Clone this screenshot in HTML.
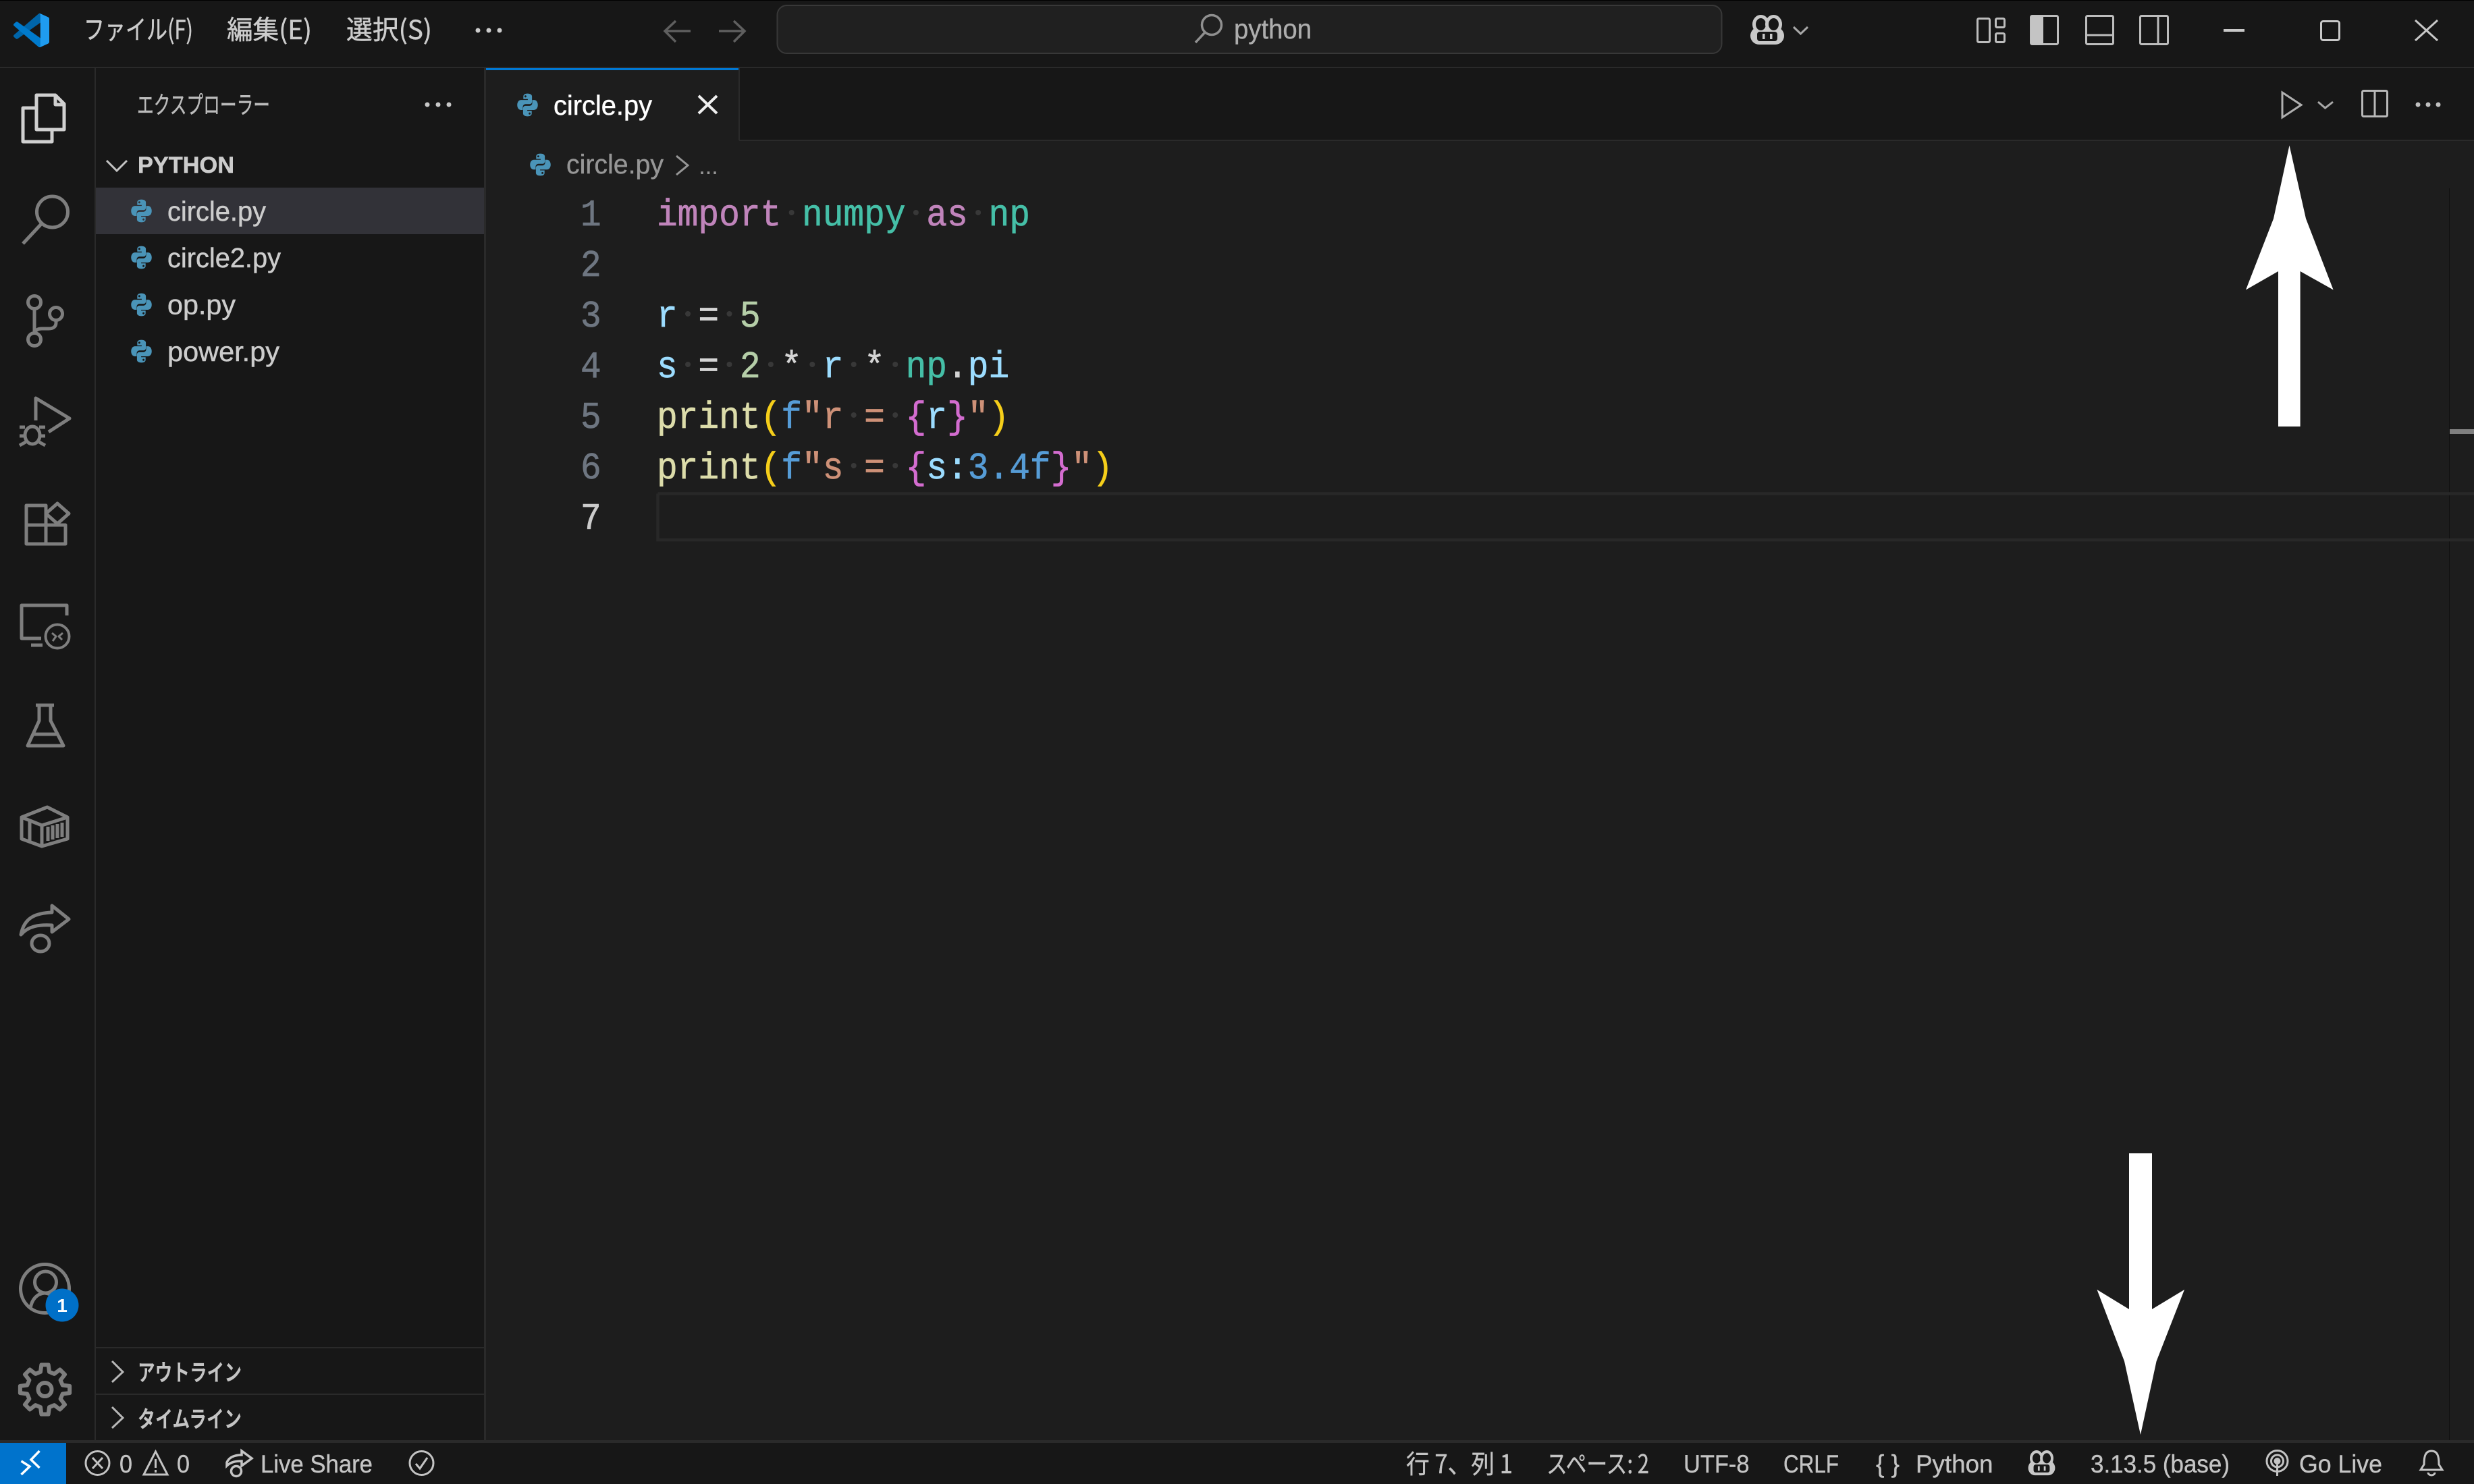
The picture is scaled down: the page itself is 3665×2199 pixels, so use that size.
<!DOCTYPE html>
<html lang="ja"><head><meta charset="utf-8"><title>circle.py - python</title>
<style>
html,body{margin:0;padding:0;background:#171717;width:3665px;height:2199px;overflow:hidden}
svg{display:block}
text{white-space:pre}
.s{font-family:"Liberation Sans","Noto Sans CJK JP",sans-serif}
.j{font-family:"Noto Sans CJK JP","Liberation Sans",sans-serif}
.m{font-family:"Liberation Mono",monospace;font-size:56px;stroke-width:.7}
.ic{fill:none;stroke:#7e7e7e;stroke-width:5;stroke-linejoin:round}
.tb{fill:none;stroke:#bdbdbd;stroke-width:3}
.st{fill:none;stroke:#c4c4c4;stroke-width:3}
.d{fill:#383838}
.ln{fill:#6e7681;stroke:#6e7681}
.cur{fill:#cccccc;stroke:#cccccc}
.kw{fill:#c084bb;stroke:#c084bb}
.ty{fill:#45bfa7;stroke:#45bfa7}
.va{fill:#9cdcfe;stroke:#9cdcfe}
.op{fill:#d4d4d4;stroke:#d4d4d4}
.nu{fill:#b5cea8;stroke:#b5cea8}
.fn{fill:#dcdcaa;stroke:#dcdcaa}
.br{fill:#f5ce1a;stroke:#f5ce1a}
.bl{fill:#569cd6;stroke:#569cd6}
.sr{fill:#ce9178;stroke:#ce9178}
.cb{fill:#d36ccf;stroke:#d36ccf}
</style></head><body>
<svg xmlns="http://www.w3.org/2000/svg" width="3665" height="2199" viewBox="0 0 3665 2199">
<defs>
<symbol id="py" viewBox="0 0 16 16" preserveAspectRatio="none">
<path fill="#4a94b8" fill-rule="evenodd" d="M8 .3C5.8.3 5 1.1 5 2.3V4H8.2V4.6H3.4C1.8 4.6.6 5.9.6 8s1.2 3.4 2.6 3.4H4.6V9.4C4.6 8.3 5.5 7.4 6.6 7.4H9.6C10.5 7.4 11.2 6.7 11.2 5.8V2.3C11.2 1.1 10.1.3 8 .3ZM6.5 1.5a.7.7 0 1 1 0 1.4.7.7 0 0 1 0-1.4Z"/>
<path fill="#4a94b8" fill-rule="evenodd" transform="rotate(180 8 8)" d="M8 .3C5.8.3 5 1.1 5 2.3V4H8.2V4.6H3.4C1.8 4.6.6 5.9.6 8s1.2 3.4 2.6 3.4H4.6V9.4C4.6 8.3 5.5 7.4 6.6 7.4H9.6C10.5 7.4 11.2 6.7 11.2 5.8V2.3C11.2 1.1 10.1.3 8 .3ZM6.5 1.5a.7.7 0 1 1 0 1.4.7.7 0 0 1 0-1.4Z"/>
</symbol>
<symbol id="cop" viewBox="0 0 54 45" preserveAspectRatio="none">
<rect x="2" y="18" width="50" height="26" rx="13" fill="#c8c8c8"/>
<ellipse cx="17.5" cy="14" rx="10" ry="11.5" fill="#171717" stroke="#c8c8c8" stroke-width="5"/>
<ellipse cx="36.5" cy="14" rx="10" ry="11.5" fill="#171717" stroke="#c8c8c8" stroke-width="5"/>
<rect x="12" y="25" width="30" height="14" rx="4" fill="#171717"/>
<rect x="20" y="28" width="3.5" height="8" fill="#c8c8c8"/><rect x="31" y="28" width="3.5" height="8" fill="#c8c8c8"/>
</symbol>
</defs>

<!-- backgrounds -->
<rect width="3665" height="2199" fill="#171717"/>
<rect x="720" y="101" width="2945" height="2033" fill="#1d1d1d"/>
<rect x="1095" y="101" width="2570" height="106" fill="#171717"/>
<rect y="0" width="3665" height="1" fill="#000"/>
<!-- borders -->
<rect y="99" width="3665" height="2" fill="#2a2a2a"/>
<rect x="140" y="101" width="2" height="2033" fill="#2a2a2a"/>
<rect x="717" y="101" width="3" height="2033" fill="#2a2a2a"/>
<rect x="1094" y="101" width="2" height="107" fill="#2a2a2a"/>
<rect x="1095" y="207" width="2570" height="2" fill="#2a2a2a"/>
<rect x="720" y="101" width="374" height="3" fill="#0078d4"/>
<rect y="2134" width="3665" height="4" fill="#2a2a2a"/>
<rect x="3628" y="279" width="1" height="1855" fill="#111"/>
<rect x="3629" y="636" width="36" height="7" fill="#808080"/>

<!-- title bar -->
<svg x="20" y="20" width="53" height="50" viewBox="0 0 100 100" preserveAspectRatio="none">
<path fill="#0065A9" d="M96.46 10.8 75.86.87a6.23 6.23 0 0 0-7.1 1.2L1.3 63.6a4.16 4.16 0 0 0 0 6.16l5.5 5a4.16 4.16 0 0 0 5.32-.24L93.3 13.4a4.13 4.13 0 0 1 6.7 3.3v-.24a6.25 6.25 0 0 0-3.54-5.66Z"/>
<path fill="#007ACC" d="M96.46 89.2 75.86 99.13a6.23 6.23 0 0 1-7.1-1.2L1.3 36.4a4.16 4.16 0 0 1 0-6.16l5.5-5a4.16 4.16 0 0 1 5.32.24L93.3 86.6a4.13 4.13 0 0 0 6.7-3.3v.24a6.25 6.25 0 0 1-3.54 5.66Z"/>
<path fill="#1F9CF0" d="M75.86 99.13a6.24 6.24 0 0 1-7.1-1.2c2.3 2.3 6.24.67 6.24-2.58V4.65c0-3.25-3.94-4.88-6.24-2.58a6.24 6.24 0 0 1 7.1-1.2L96.46 10.8A6.25 6.25 0 0 1 100 16.44v67.12a6.25 6.25 0 0 1-3.54 5.64Z"/>
</svg>
<g class="j" font-size="39" fill="#cccccc" stroke="#cccccc" stroke-width=".5">
<text x="124" y="58" textLength="162" lengthAdjust="spacingAndGlyphs">ファイル(F)</text>
<text x="336" y="58" textLength="126" lengthAdjust="spacingAndGlyphs">編集(E)</text>
<text x="513" y="58" textLength="127" lengthAdjust="spacingAndGlyphs">選択(S)</text>
</g>
<g fill="#cccccc"><circle cx="708" cy="45" r="3.5"/><circle cx="724" cy="45" r="3.5"/><circle cx="740" cy="45" r="3.5"/></g>
<path d="M1023 46H985M1001 31 985 46 1001 62" fill="none" stroke="#5f5f5f" stroke-width="3.5"/>
<path d="M1065 46H1103M1087 31 1103 46 1087 62" fill="none" stroke="#5f5f5f" stroke-width="3.5"/>
<rect x="1151.5" y="8" width="1399" height="71" rx="14" fill="#202020" stroke="#383838" stroke-width="2"/>
<circle cx="1795" cy="37" r="14.5" fill="none" stroke="#8f8f8f" stroke-width="3.5"/>
<path d="M1785 48 1771 63" fill="none" stroke="#8f8f8f" stroke-width="3.5"/>
<text class="s" x="1828" y="57" font-size="41" fill="#adadad" stroke="#adadad" stroke-width=".4" textLength="115" lengthAdjust="spacingAndGlyphs">python</text>
<use href="#cop" x="2591" y="22" width="54" height="45"/>
<path d="M2657 40 2667.5 50 2678 40" fill="none" stroke="#a8a8a8" stroke-width="3"/>
<g class="tb">
<rect x="2929.5" y="27.5" width="18" height="35" rx="2"/><rect x="2956.5" y="27.5" width="13" height="13" rx="2"/><rect x="2956.5" y="49.5" width="13" height="13" rx="2"/>
<rect x="3008.5" y="23.5" width="40" height="42" rx="2"/>
<rect x="3090.5" y="23.5" width="40" height="42" rx="2"/><path d="M3090 52H3131"/>
<rect x="3170.5" y="23.5" width="41" height="42" rx="2"/><path d="M3197 23V66"/>
</g>
<rect x="3008" y="23" width="19" height="43" rx="2" fill="#c4c4c4"/>
<rect x="3294" y="43" width="31" height="4" fill="#c8c8c8"/>
<rect x="3438.5" y="31.5" width="27" height="28" rx="3" fill="none" stroke="#c8c8c8" stroke-width="3"/>
<path d="M3578 30 3611 60M3611 30 3578 60" fill="none" stroke="#c8c8c8" stroke-width="3"/>

<!-- activity bar -->
<g class="ic" style="stroke:#d0d0d0;stroke-width:5">
<path d="M54 141H82L95 154V192H54Z"/><path d="M82 141V155H95"/><path d="M52 160H34V210H77V194"/>
</g>
<g class="ic">
<circle cx="77.5" cy="314" r="23"/><path d="M61 332 34 361"/>
<circle cx="51" cy="448" r="9.5"/><circle cx="51" cy="503" r="9.5"/><circle cx="83" cy="465" r="9.5"/>
<path d="M51 458V493M83 475V478Q83 487 72 487H62Q53 487 51 494"/>
<path d="M53 623V590L103 620 72 640"/>
<ellipse cx="48" cy="645" rx="11" ry="13"/><path d="M29 633H37M29 646H37M29 660 38 655M58 633H67M58 646H67M67 660 58 655"/>
<path d="M68 778V749H39V806H97V778H39M68 778V806"/><path d="M68 761 85 746 102 761 85 776Z"/>
<path d="M99 912V897H32V946H61M46 956H63"/>
<circle cx="85" cy="943" r="17.5" stroke-width="4"/><path d="M77 938 83 943 78 950M93 938 87 943 92 948" stroke-width="3"/>
<path d="M53 1045H80M58 1045V1068L41 1105H94L75 1068V1045M49 1088H86"/>
<path d="M32 1211 70 1196 100 1211V1243L62 1254 32 1243ZM32 1211 62 1223 100 1211M62 1223V1254M44 1217V1247M71 1225V1246M78 1223V1244M85 1221V1242M92 1219V1240"/>
<path d="M31 1385C36 1358 55 1353 77 1352V1342L102 1362 77 1381V1371C58 1370 42 1372 31 1385Z" stroke-width="5"/>
<ellipse cx="60" cy="1398" rx="13" ry="12" stroke-width="5"/>
<circle cx="66.5" cy="1909.5" r="36"/><circle cx="67.5" cy="1900" r="16"/><path d="M45 1939C47 1925 55 1917 66 1916C78 1917 86 1925 88 1939"/>
<path transform="translate(66.5 2059)" stroke-width="6" d="M-6.53-26.2-5.15-36.64 5.15-36.64 6.53-26.2 13.91-23.14 22.27-29.55 29.55-22.27 23.14-13.91 26.2-6.53 36.64-5.15 36.64 5.15 26.2 6.53 23.14 13.91 29.55 22.27 22.27 29.55 13.91 23.14 6.53 26.2 5.15 36.64-5.15 36.64-6.53 26.2-13.91 23.14-22.27 29.55-29.55 22.27-23.14 13.91-26.2 6.53-36.64 5.15-36.64-5.15-26.2-6.53-23.14-13.91-29.55-22.27-22.27-29.55-13.91-23.14Z"/>
<circle cx="66.5" cy="2059" r="10" stroke-width="6"/>
</g>
<circle cx="92" cy="1934" r="24.5" fill="#0070c8"/>
<text class="s" x="92" y="1944" font-size="28" font-weight="700" fill="#fff" text-anchor="middle">1</text>

<!-- sidebar -->
<text class="j" x="203" y="168" font-size="36" fill="#bbbbbb" stroke="#bbbbbb" stroke-width=".5" textLength="197" lengthAdjust="spacingAndGlyphs">エクスプローラー</text>
<g fill="#c8c8c8"><circle cx="633" cy="155" r="3.5"/><circle cx="649" cy="155" r="3.5"/><circle cx="665" cy="155" r="3.5"/></g>
<path d="M158 238 173 253 188 238" fill="none" stroke="#c4c4c4" stroke-width="3"/>
<text class="s" x="204" y="256" font-size="34" font-weight="700" fill="#cccccc" stroke="#cccccc" stroke-width=".5" textLength="143" lengthAdjust="spacingAndGlyphs">PYTHON</text>
<rect x="142" y="278" width="575" height="69" fill="#323238"/>
<use href="#py" x="193" y="295" width="33" height="35"/>
<use href="#py" x="193" y="364" width="33" height="35"/>
<use href="#py" x="193" y="434" width="33" height="35"/>
<use href="#py" x="193" y="503" width="33" height="35"/>
<g class="s" font-size="41" fill="#cccccc" stroke="#cccccc" stroke-width=".5">
<text x="248" y="327" textLength="146" lengthAdjust="spacingAndGlyphs">circle.py</text>
<text x="248" y="396" textLength="168" lengthAdjust="spacingAndGlyphs">circle2.py</text>
<text x="248" y="465.5" textLength="101" lengthAdjust="spacingAndGlyphs">op.py</text>
<text x="248" y="535" textLength="166" lengthAdjust="spacingAndGlyphs">power.py</text>
</g>
<rect x="142" y="1996" width="575" height="2" fill="#2a2a2a"/>
<rect x="142" y="2065" width="575" height="2" fill="#2a2a2a"/>
<path d="M166 2017 182 2033 166 2048M166 2085 182 2101 166 2116" fill="none" stroke="#b8b8b8" stroke-width="3"/>
<g class="j" font-size="34" font-weight="700" fill="#c4c4c4">
<text x="204" y="2046" textLength="154" lengthAdjust="spacingAndGlyphs">アウトライン</text>
<text x="204" y="2115" textLength="154" lengthAdjust="spacingAndGlyphs">タイムライン</text>
</g>

<!-- tab -->
<use href="#py" x="765" y="138" width="33" height="35"/>
<text class="s" x="820" y="170" font-size="41" fill="#ffffff" stroke="#ffffff" stroke-width=".5" textLength="146" lengthAdjust="spacingAndGlyphs">circle.py</text>
<path d="M1035 142 1062 168M1062 142 1035 168" fill="none" stroke="#f0f0f0" stroke-width="4"/>
<path d="M3381 137 3409 155.5 3381 174Z" fill="none" stroke="#b0b0b0" stroke-width="3"/>
<path d="M3434 151 3444.5 160 3456 151" fill="none" stroke="#a8a8a8" stroke-width="3"/>
<rect x="3499.5" y="134.5" width="37" height="38" rx="2" fill="none" stroke="#b8b8b8" stroke-width="3"/>
<path d="M3518 134V173" stroke="#b8b8b8" stroke-width="3"/>
<g fill="#c0c0c0"><circle cx="3582" cy="155" r="3.5"/><circle cx="3597" cy="155" r="3.5"/><circle cx="3612" cy="155" r="3.5"/></g>

<!-- breadcrumb -->
<use href="#py" x="784" y="227" width="33" height="34"/>
<text class="s" x="839" y="257" font-size="40" fill="#969696" stroke="#969696" stroke-width=".4" textLength="144" lengthAdjust="spacingAndGlyphs">circle.py</text>
<path d="M1002 231 1019 245 1002 259" fill="none" stroke="#969696" stroke-width="3"/>
<text class="s" x="1035" y="258" font-size="36" fill="#969696" textLength="29" lengthAdjust="spacing">...</text>

<!-- current line -->
<path d="M974.5 731.5H3665M3665 800H974.5V731.5" fill="none" stroke="#282828" stroke-width="4.5"/>

<!-- line numbers -->
<g class="m">
<text class="ln" x="860" y="334" textLength="30.66" lengthAdjust="spacingAndGlyphs">1</text>
<text class="ln" x="860" y="409" textLength="30.66" lengthAdjust="spacingAndGlyphs">2</text>
<text class="ln" x="860" y="484" textLength="30.66" lengthAdjust="spacingAndGlyphs">3</text>
<text class="ln" x="860" y="559" textLength="30.66" lengthAdjust="spacingAndGlyphs">4</text>
<text class="ln" x="860" y="634" textLength="30.66" lengthAdjust="spacingAndGlyphs">5</text>
<text class="ln" x="860" y="709" textLength="30.66" lengthAdjust="spacingAndGlyphs">6</text>
<text class="cur" x="860" y="784" textLength="30.66" lengthAdjust="spacingAndGlyphs">7</text>
</g>

<!-- whitespace dots -->
<g class="d" transform="translate(-3 0) scale(1.002 1)">
<circle cx="1173.3" cy="315" r="4"/><circle cx="1357.2" cy="315" r="4"/><circle cx="1449.2" cy="315" r="4"/>
<circle cx="1020" cy="465" r="4"/><circle cx="1081.3" cy="465" r="4"/>
<circle cx="1020" cy="540" r="4"/><circle cx="1081.3" cy="540" r="4"/><circle cx="1142.6" cy="540" r="4"/><circle cx="1203.9" cy="540" r="4"/><circle cx="1265.2" cy="540" r="4"/><circle cx="1326.6" cy="540" r="4"/>
<circle cx="1265.2" cy="615" r="4"/><circle cx="1326.6" cy="615" r="4"/>
<circle cx="1265.2" cy="690" r="4"/><circle cx="1326.6" cy="690" r="4"/>
</g>

<!-- code -->
<g class="m" transform="translate(-3 0) scale(1.002 1)">
<text class="kw" x="974" y="334" textLength="183.96" lengthAdjust="spacingAndGlyphs">import</text>
<text class="ty" x="1188.62" y="334" textLength="153.3" lengthAdjust="spacingAndGlyphs">numpy</text>
<text class="kw" x="1372.58" y="334" textLength="61.32" lengthAdjust="spacingAndGlyphs">as</text>
<text class="ty" x="1464.56" y="334" textLength="61.32" lengthAdjust="spacingAndGlyphs">np</text>

<text class="va" x="974" y="484" textLength="30.66" lengthAdjust="spacingAndGlyphs">r</text>
<text class="op" x="1035.32" y="484" textLength="30.66" lengthAdjust="spacingAndGlyphs">=</text>
<text class="nu" x="1096.64" y="484" textLength="30.66" lengthAdjust="spacingAndGlyphs">5</text>

<text class="va" x="974" y="559" textLength="30.66" lengthAdjust="spacingAndGlyphs">s</text>
<text class="op" x="1035.32" y="559" textLength="30.66" lengthAdjust="spacingAndGlyphs">=</text>
<text class="nu" x="1096.64" y="559" textLength="30.66" lengthAdjust="spacingAndGlyphs">2</text>
<text class="op" x="1157.96" y="559" textLength="30.66" lengthAdjust="spacingAndGlyphs">*</text>
<text class="va" x="1219.28" y="559" textLength="30.66" lengthAdjust="spacingAndGlyphs">r</text>
<text class="op" x="1280.6" y="559" textLength="30.66" lengthAdjust="spacingAndGlyphs">*</text>
<text class="ty" x="1341.92" y="559" textLength="61.32" lengthAdjust="spacingAndGlyphs">np</text>
<text class="op" x="1403.24" y="559" textLength="30.66" lengthAdjust="spacingAndGlyphs">.</text>
<text class="va" x="1433.9" y="559" textLength="61.32" lengthAdjust="spacingAndGlyphs">pi</text>

<text class="fn" x="974" y="634" textLength="153.3" lengthAdjust="spacingAndGlyphs">print</text>
<text class="br" x="1127.3" y="634" textLength="30.66" lengthAdjust="spacingAndGlyphs">(</text>
<text class="bl" x="1157.96" y="634" textLength="30.66" lengthAdjust="spacingAndGlyphs">f</text>
<text class="sr" x="1188.62" y="634" textLength="61.32" lengthAdjust="spacingAndGlyphs">"r</text>
<text class="sr" x="1280.6" y="634" textLength="30.66" lengthAdjust="spacingAndGlyphs">=</text>
<text class="cb" x="1341.92" y="634" textLength="30.66" lengthAdjust="spacingAndGlyphs">{</text>
<text class="va" x="1372.58" y="634" textLength="30.66" lengthAdjust="spacingAndGlyphs">r</text>
<text class="cb" x="1403.24" y="634" textLength="30.66" lengthAdjust="spacingAndGlyphs">}</text>
<text class="sr" x="1433.9" y="634" textLength="30.66" lengthAdjust="spacingAndGlyphs">"</text>
<text class="br" x="1464.56" y="634" textLength="30.66" lengthAdjust="spacingAndGlyphs">)</text>

<text class="fn" x="974" y="709" textLength="153.3" lengthAdjust="spacingAndGlyphs">print</text>
<text class="br" x="1127.3" y="709" textLength="30.66" lengthAdjust="spacingAndGlyphs">(</text>
<text class="bl" x="1157.96" y="709" textLength="30.66" lengthAdjust="spacingAndGlyphs">f</text>
<text class="sr" x="1188.62" y="709" textLength="61.32" lengthAdjust="spacingAndGlyphs">"s</text>
<text class="sr" x="1280.6" y="709" textLength="30.66" lengthAdjust="spacingAndGlyphs">=</text>
<text class="cb" x="1341.92" y="709" textLength="30.66" lengthAdjust="spacingAndGlyphs">{</text>
<text class="va" x="1372.58" y="709" textLength="30.66" lengthAdjust="spacingAndGlyphs">s</text>
<text class="va" x="1403.24" y="709" textLength="30.66" lengthAdjust="spacingAndGlyphs">:</text>
<text class="bl" x="1433.9" y="709" textLength="122.64" lengthAdjust="spacingAndGlyphs">3.4f</text>
<text class="cb" x="1556.54" y="709" textLength="30.66" lengthAdjust="spacingAndGlyphs">}</text>
<text class="sr" x="1587.2" y="709" textLength="30.66" lengthAdjust="spacingAndGlyphs">"</text>
<text class="br" x="1617.86" y="709" textLength="30.66" lengthAdjust="spacingAndGlyphs">)</text>
</g>

<!-- white annotation arrows -->
<path fill="#fff" d="M3391.5 215.5 3416 324 3456.6 429.5 3407.6 402V632H3375V402L3327 429.5 3368 324Z"/>
<path fill="#fff" d="M3154 1709H3188V1940L3236 1911 3194.6 2017 3171 2126 3147 2017 3106.5 1911 3154 1940Z"/>

<!-- status bar -->
<rect y="2138" width="98" height="61" fill="#0073cc"/>
<path d="M58.5 2150 46 2163 58.5 2175M31.5 2165 44 2173 31.5 2185" fill="none" stroke="#fff" stroke-width="3.5"/>
<g class="st">
<circle cx="144.5" cy="2168" r="17.5"/><path d="M137 2160 152 2176M152 2160 137 2176"/>
<path d="M230.5 2151 213 2185H248Z"/><path d="M230.5 2162V2175M230.5 2178V2182"/>
<path d="M336 2167C340 2158 350 2156 358 2156V2150L373 2161 358 2172V2165C350 2165 342 2166 336 2172Z" stroke-width="3.5"/>
<circle cx="350" cy="2180" r="7.5" stroke-width="3.5"/>
<circle cx="624.5" cy="2168" r="17.5"/><path d="M616 2169 622 2176 633 2160"/>
<circle cx="3373.5" cy="2165" r="15.5"/><circle cx="3373.5" cy="2165" r="9"/><circle cx="3373.5" cy="2165" r="3.5" fill="#c4c4c4"/><path d="M3373.5 2170V2187"/>
<path d="M3602 2150C3592 2150 3591 2160 3591 2170L3586 2178H3618L3613 2170C3613 2160 3612 2150 3602 2150Z"/><path d="M3597 2182A5 4 0 0 0 3607 2182"/>
</g>
<use href="#cop" x="3003" y="2149" width="43" height="38"/>
<g class="s" font-size="37" fill="#c4c4c4" stroke="#c4c4c4" stroke-width=".4">
<text x="177" y="2182" textLength="19" lengthAdjust="spacingAndGlyphs">0</text>
<text x="262" y="2182" textLength="19" lengthAdjust="spacingAndGlyphs">0</text>
<text x="386" y="2182" textLength="166" lengthAdjust="spacingAndGlyphs">Live Share</text>
<text x="2083" y="2183" class="j" font-size="38" textLength="158" lengthAdjust="spacingAndGlyphs">行 7、列 1</text>
<text x="2291" y="2183" class="j" font-size="38" textLength="152" lengthAdjust="spacingAndGlyphs">スペース: 2</text>
<text x="2494" y="2182" textLength="97.5" lengthAdjust="spacingAndGlyphs">UTF-8</text>
<text x="2642" y="2182" textLength="82" lengthAdjust="spacingAndGlyphs">CRLF</text>
<text x="2779" y="2182" textLength="35" lengthAdjust="spacing">{ }</text>
<text x="2838" y="2182" textLength="114.5" lengthAdjust="spacingAndGlyphs">Python</text>
<text x="3097" y="2182" textLength="206" lengthAdjust="spacingAndGlyphs">3.13.5 (base)</text>
<text x="3406" y="2182" textLength="123" lengthAdjust="spacingAndGlyphs">Go Live</text>
</g>
</svg>
</body></html>
